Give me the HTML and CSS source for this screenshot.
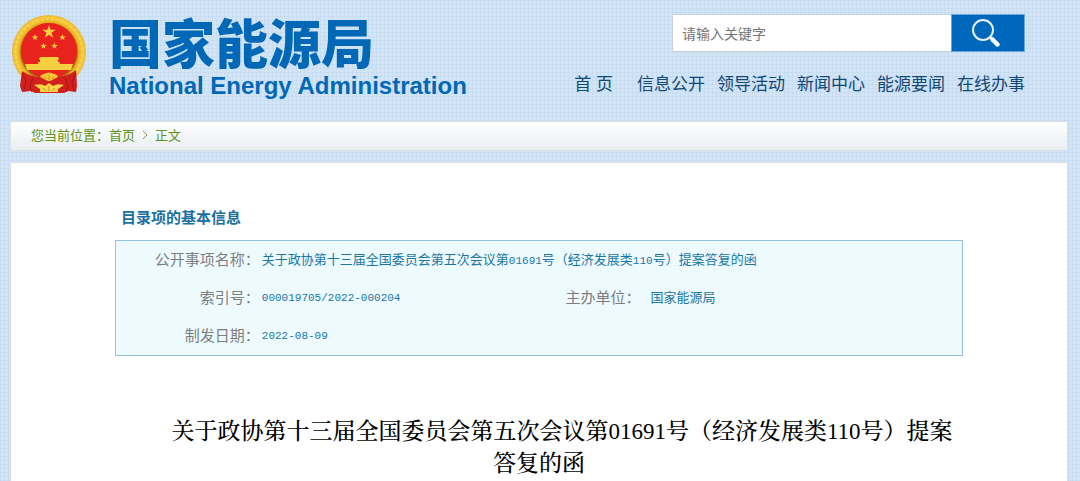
FILE: index.html
```html
<!DOCTYPE html>
<html lang="zh-CN">
<head>
<meta charset="utf-8">
<title>国家能源局</title>
<link rel="stylesheet" href="styles.css">
</head>
<body>
<header class="header">
  <a class="brand" href="#">
    <svg class="emblem" viewBox="11 14 76 81" aria-hidden="true">
      <defs>
        <polygon id="star" points="0,-1 .225,-.309 .951,-.309 .363,.118 .588,.809 0,.382 -.588,.809 -.363,.118 -.951,-.309 -.225,-.309"/>
        <radialGradient id="gold" gradientUnits="userSpaceOnUse" cx="49" cy="52" r="38">
          <stop offset=".74" stop-color="#a8700f"/><stop offset=".78" stop-color="#e6ad22"/>
          <stop offset=".88" stop-color="#fbd548"/><stop offset="1" stop-color="#e3ac2c"/>
        </radialGradient>
      </defs>
      <circle cx="49" cy="52" r="37" fill="url(#gold)"/>
      <circle cx="49" cy="52" r="33" fill="none" stroke="#e3a61f" stroke-width="3" stroke-dasharray="2 3" opacity=".25"/>
      <circle cx="49" cy="51" r="28" fill="#e8231e"/>
      <g fill="#f9cf3f">
        <use href="#star" transform="translate(49 32) scale(7)"/>
        <use href="#star" transform="translate(35 37.500) scale(3.500)"/>
        <use href="#star" transform="translate(62.500 37.500) scale(3.500)"/>
        <use href="#star" transform="translate(43.500 46) scale(3.500)"/>
        <use href="#star" transform="translate(54.500 46) scale(3.500)"/>
        <path d="M40 57h18l1 2-1 1v2h2v2H38v-2h2v-2l-1-1zM25 64h48l-2 6H27z"/>
      </g>
      <path d="M22 71q11 7 20 6l7 3 7-3q11 0 20-7l1 16-1 6-8-1-4 2H35l-4-2-9 1-2-6z" fill="#d3201c"/>
      <path d="M22 73l4 8-2 10M33 78l-3 8 2 6M76 73l-4 8 2 10M65 78l3 8-2 6" stroke="#a3161a" fill="none"/>
      <path d="M40 77q1-3 4-3 5-3 10 0 3 0 4 3l-4 2q-5 4-10 0z" fill="#f5c535"/>
      <path d="M34 85q8-2 11 1l4-3 4 3q4-3 11-1l-6 4v3H40v-3z" fill="#f8d64a"/>
      <path d="M44 77l2 2M49 75v5M54 77l-2 2M43 88l3 3M49 86v5M55 88l-3 3" stroke="#d58d18" fill="none"/>
    </svg>
    <span class="brand-text">
      <span class="brand-cn">国家能源局</span>
      <span class="brand-en">National Energy Administration</span>
    </span>
  </a>
  <div class="tools">
    <form class="search">
      <input class="search-input" type="text" placeholder="请输入关键字" aria-label="请输入关键字">
      <button class="search-button" type="button" aria-label="搜索">
        <svg class="search-icon" viewBox="0 0 30 30" aria-hidden="true">
          <circle cx="12" cy="12" r="10" fill="none" stroke="#e6f1fb" stroke-width="2"/>
          <path d="M19 19l2.500 2.500" stroke="#fff" stroke-width="2"/>
          <path d="M21.500 21.500l5 5" stroke="#fff" stroke-width="4.500" stroke-linecap="round"/>
        </svg>
      </button>
    </form>
    <nav class="nav">
      <a class="nav-home" href="#">首 页</a>
      <a href="#">信息公开</a>
      <a href="#">领导活动</a>
      <a href="#">新闻中心</a>
      <a href="#">能源要闻</a>
      <a href="#">在线办事</a>
    </nav>
  </div>
</header>
<div class="crumbs">您当前位置：<a href="#">首页</a><svg class="crumb-arrow" viewBox="0 0 6 10" aria-hidden="true"><path d="M1 1l4 4-4 4" fill="none" stroke="#7ba04a"/></svg><span>正文</span></div>
<main class="content">
  <section class="info">
    <h2 class="info-heading">目录项的基本信息</h2>
    <table class="info-table">
      <tr>
        <th class="col-first" scope="row">公开事项名称：</th>
        <td colspan="3">关于政协第十三届全国委员会第五次会议第<span class="num">01691</span>号（经济发展类<span class="num">110</span>号）提案答复的函</td>
      </tr>
      <tr>
        <th scope="row">索引号：</th>
        <td class="col-value"><span class="num">000019705/2022-000204</span></td>
        <th class="col-second" scope="row">主办单位：</th>
        <td class="office">国家能源局</td>
      </tr>
      <tr>
        <th scope="row">制发日期：</th>
        <td colspan="3"><span class="num">2022-08-09</span></td>
      </tr>
    </table>
  </section>
  <h1 class="title">关于政协第十三届全国委员会第五次会议第01691号（经济发展类110号）提案答复的函</h1>
</main>
</body>
</html>
```
FILE: styles.css
```css
* {
  box-sizing: border-box;
}

body {
  margin: 0;
  padding: 0 12px 0 10px;
  min-height: 100vh;
  display: flex;
  flex-direction: column;
  font-family: "Liberation Sans", "Noto Sans CJK SC", sans-serif;
  background-color: #d2e4f5;
  background-image:
    repeating-linear-gradient(90deg, rgba(150, 185, 220, 0.12) 0 1px, transparent 1px 4px),
    repeating-linear-gradient(0deg, rgba(150, 185, 220, 0.12) 0 1px, transparent 1px 4px);
}

a {
  color: inherit;
  text-decoration: none;
}

.header {
  display: flex;
  justify-content: space-between;
  padding: 14px 43px 0 1px;
  height: 121px;
}

.brand {
  display: flex;
  gap: 22px;
  color: #0068b7;
}

.emblem {
  width: 76px;
  height: 81px;
}

.brand-text {
  display: flex;
  flex-direction: column;
  font-weight: 700;
  white-space: nowrap;
}

.brand-cn {
  font-family: "Noto Sans CJK SC", sans-serif;
  font-weight: 900;
  font-size: 53px;
  line-height: 54px;
}

.brand-en {
  font-size: 24px;
  line-height: 36px;
}

.tools {
  display: flex;
  flex-direction: column;
  align-items: flex-end;
  gap: 20px;
}

.search {
  display: flex;
}

.search-input {
  width: 279px;
  height: 38px;
  padding: 0 9px;
  border: 1px solid #c9d3dd;
  border-right: 0;
  background: #fff;
  font-family: "Noto Sans CJK SC", sans-serif;
  font-size: 14px;
  color: #666;
}

.search-input::placeholder {
  color: #757575;
}

.search-button {
  display: flex;
  align-items: center;
  justify-content: center;
  width: 74px;
  height: 38px;
  padding: 0 5px 0 0;
  border: 1px solid #6da8dc;
  background: #0068bc;
}

.search-icon {
  width: 30px;
  height: 30px;
}

.nav {
  display: flex;
  gap: 12px;
  font-size: 17px;
  line-height: 26px;
  color: #124878;
  white-space: nowrap;
}

.nav-home {
  padding-right: 12px;
}

.crumbs {
  display: flex;
  align-items: center;
  height: 30px;
  padding: 0 20px 3px;
  border: 1px solid #dcdfe2;
  background: linear-gradient(#fff, #e9eef2);
  font-size: 13px;
  color: #5f921b;
}

.crumb-arrow {
  width: 6px;
  height: 10px;
  margin: 0 7px;
}

.content {
  flex: 1;
  margin-top: 11px;
  padding: 43px 104px 0;
  border: 1px solid #dcdfe2;
  border-bottom: 0;
  background: #fff;
}

.info-heading {
  margin: 0 0 11px;
  padding-left: 6px;
  font-size: 15px;
  line-height: 23px;
  font-weight: 700;
  color: #1a6fa3;
}

.info-table {
  width: 100%;
  border: 1px solid #94c1e6;
  border-collapse: separate;
  border-spacing: 0;
  background: #edfbff;
}

.info-table th,
.info-table td {
  height: 38px;
  padding: 0 0 4px;
  white-space: nowrap;
}

.info-table th {
  font-size: 15px;
  font-weight: 400;
  text-align: right;
  color: #7d7d7d;
}

.info-table td {
  padding-left: 2px;
  font-size: 13px;
  color: #1c75a5;
}

.info-table .office {
  padding-left: 10px;
}

.col-first {
  width: 17%;
}

.col-value {
  width: 35%;
}

.col-second {
  width: 10%;
}

.num {
  font-family: "Liberation Mono", monospace;
  font-size: 11px;
}

.title {
  margin: 60px 4px 0;
  font-family: "Liberation Serif", "Noto Serif CJK SC", "Noto Sans CJK SC", serif;
  font-size: 23px;
  line-height: 32px;
  font-weight: 500;
  text-align: center;
  text-indent: 2em;
  color: #000;
}
```
